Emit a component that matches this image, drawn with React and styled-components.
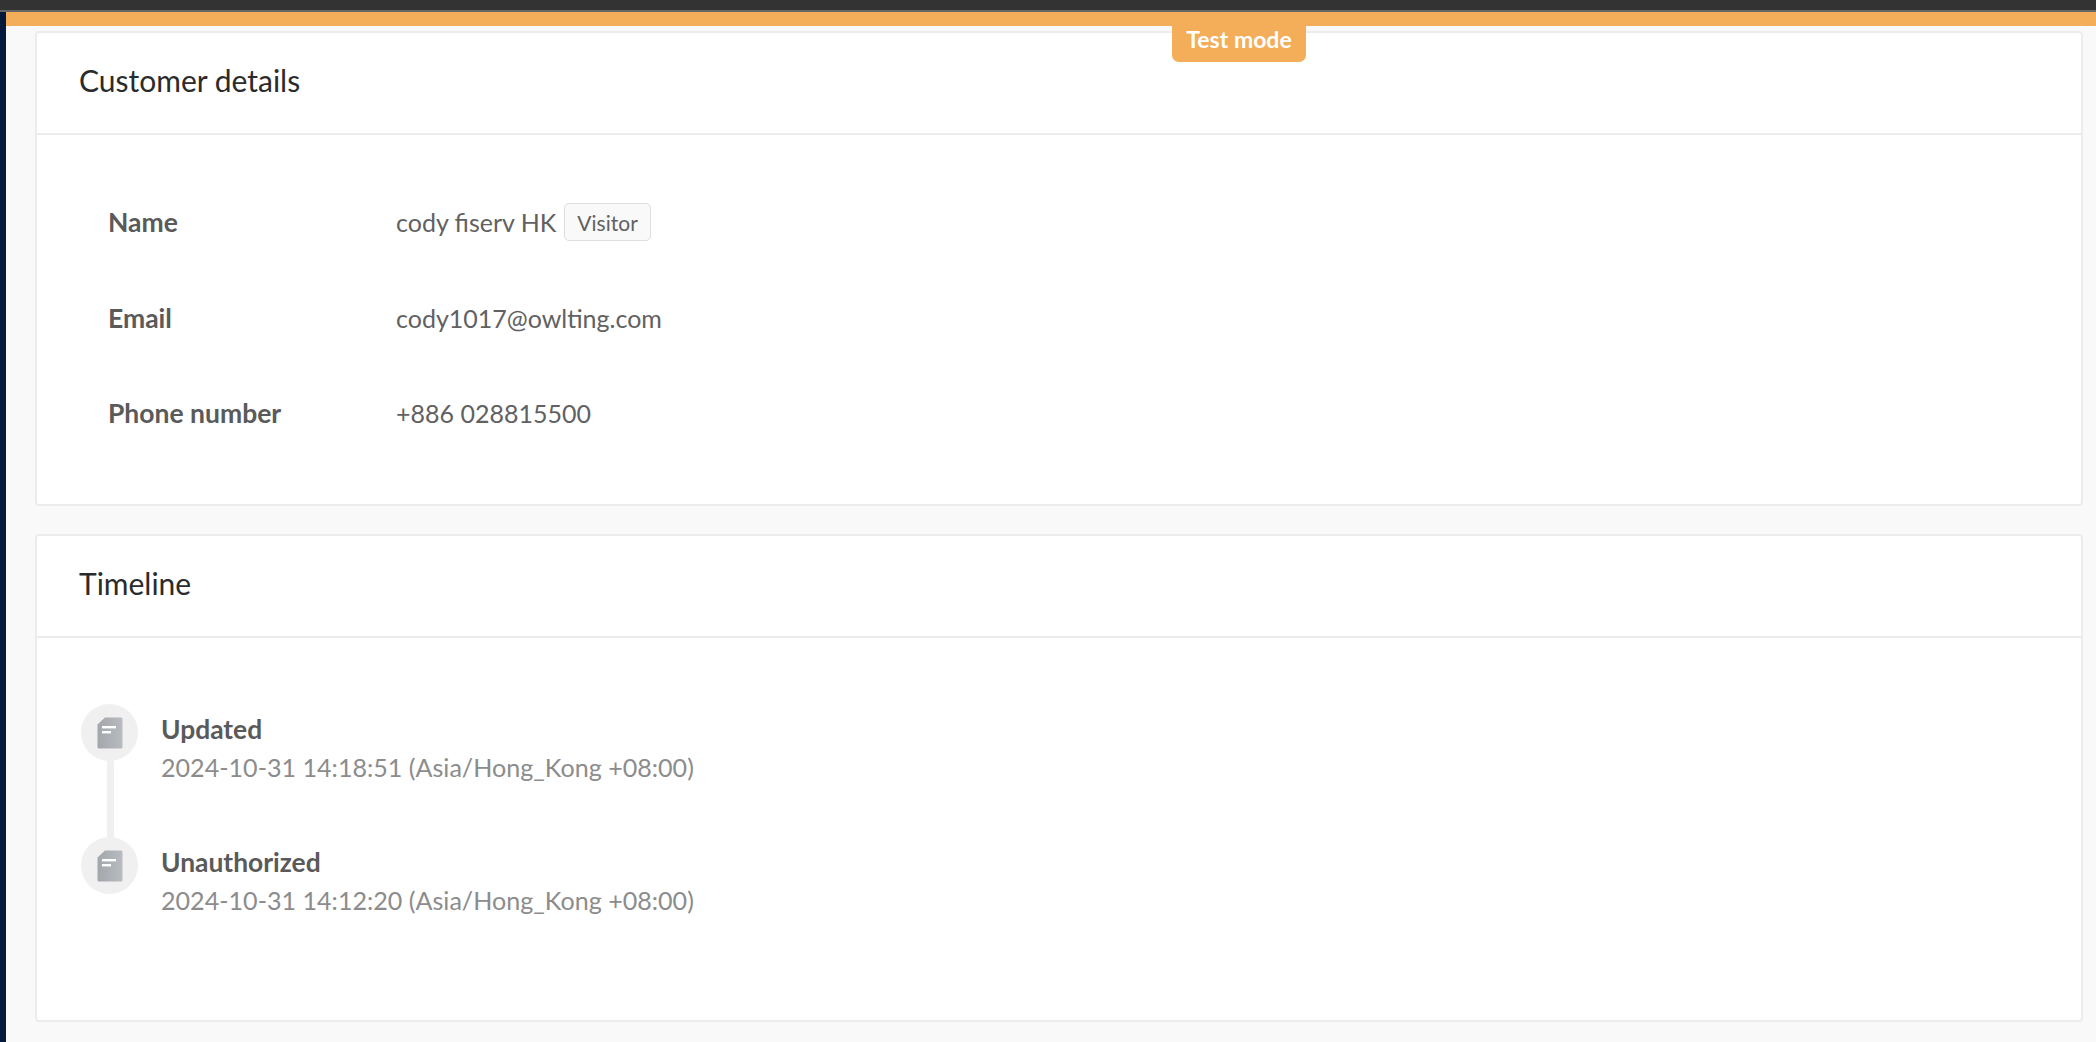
import React from "react"
import styled, { createGlobalStyle } from "styled-components"

const GlobalStyle = createGlobalStyle`
  html, body {
    margin: 0;
    padding: 0;
    background: #f9f9f9;
    font-family: Lato, "Open Sans", sans-serif;
    overflow: hidden;
  }
`

const details = [
  { label: "Name", value: "cody fiserv HK", tag: "Visitor" },
  { label: "Email", value: "cody1017@owlting.com" },
  { label: "Phone number", value: "+886 028815500" },
]

const events = [
  { title: "Updated", time: "2024-10-31 14:18:51 (Asia/Hong_Kong +08:00)" },
  { title: "Unauthorized", time: "2024-10-31 14:12:20 (Asia/Hong_Kong +08:00)" },
]

const DocIcon = ({ id }) => (
  <svg width="26" height="32" viewBox="0 0 26 32">
    <defs>
      <linearGradient id={id} x1="0" y1="0" x2="1" y2="0">
        <stop offset="0" stopColor="#a3a7ab" />
        <stop offset="1" stopColor="#b8bbbf" />
      </linearGradient>
    </defs>
    <path
      d="M8 0.5h16a1.5 1.5 0 0 1 1.5 1.5v28a1.5 1.5 0 0 1-1.5 1.5H2a1.5 1.5 0 0 1-1.5-1.5V7.5z"
      fill={`url(#${id})`}
    />
    <rect x="5" y="9" width="14" height="2.4" fill="#fff" />
    <rect x="5" y="14" width="9" height="2.4" fill="#fff" />
  </svg>
)

const App = () => {
  return (
    <Page>
      <GlobalStyle />
      <TopBar />
      <Shell>
        <SideNav />
        <Main>
          <ModeBar>
            <ModeBadge>Test mode</ModeBadge>
          </ModeBar>
          <Content>
            <Card>
              <CardHeader>Customer details</CardHeader>
              <DetailsBody>
                {details.map(item => (
                  <DetailRow key={item.label}>
                    <DetailLabel>{item.label}</DetailLabel>
                    <DetailValue>
                      {item.value}
                      {item.tag && <Tag>{item.tag}</Tag>}
                    </DetailValue>
                  </DetailRow>
                ))}
              </DetailsBody>
            </Card>
            <Card>
              <CardHeader>Timeline</CardHeader>
              <TimelineBody>
                {events.map((event, index) => (
                  <TimelineItem key={event.title} last={index === events.length - 1}>
                    <IconCircle>
                      <DocIcon id={`doc-${index}`} />
                    </IconCircle>
                    <EventText>
                      <EventTitle>{event.title}</EventTitle>
                      <EventTime>{event.time}</EventTime>
                    </EventText>
                  </TimelineItem>
                ))}
              </TimelineBody>
            </Card>
          </Content>
        </Main>
      </Shell>
    </Page>
  )
}

const Page = styled.div`
  display: flex;
  flex-direction: column;
  height: 1042px;
  overflow: hidden;
`

const TopBar = styled.div`
  height: 10px;
  flex-shrink: 0;
  background-color: #333333;
  border-bottom: 2px solid #666666;
`

const Shell = styled.div`
  display: flex;
  flex: 1;
`

const SideNav = styled.nav`
  width: 6px;
  flex-shrink: 0;
  background-color: #04193c;
`

const Main = styled.main`
  display: flex;
  flex-direction: column;
  flex: 1;
  min-width: 0;
`

const ModeBar = styled.div`
  position: relative;
  height: 14px;
  flex-shrink: 0;
  background-color: #f4ad58;
`

const ModeBadge = styled.div`
  position: absolute;
  z-index: 1;
  top: 14px;
  left: 1166px;
  width: 134px;
  height: 36px;
  box-sizing: border-box;
  text-align: center;
  font-size: 23px;
  line-height: 26px;
  font-weight: 700;
  color: #fff;
  background-color: #f4ad58;
  border-radius: 0 0 7px 7px;
`

const Content = styled.div`
  display: flex;
  flex-direction: column;
  gap: 28px;
  padding: 5px 13px 0 29px;
`

const Card = styled.section`
  background-color: #fff;
  border: 2px solid #ececec;
  border-radius: 4px;
`

const CardHeader = styled.h2`
  margin: 0;
  height: 102px;
  box-sizing: border-box;
  padding: 0 42px 6px;
  display: flex;
  align-items: center;
  font-size: 30px;
  font-weight: 400;
  color: #2b2b2b;
  border-bottom: 2px solid #ececec;
`

const DetailsBody = styled.div`
  display: flex;
  flex-direction: column;
  gap: 49.5px;
  padding: 64px 71px 68px;
`

const DetailRow = styled.div`
  display: flex;
  align-items: center;
  height: 46px;
`

const DetailLabel = styled.div`
  width: 288px;
  flex-shrink: 0;
  font-size: 26.5px;
  font-weight: 700;
  color: #5a5a5a;
`

const DetailValue = styled.div`
  display: flex;
  align-items: center;
  font-size: 25px;
  color: #616161;
`

const Tag = styled.span`
  margin-left: 8px;
  padding: 0 12px;
  height: 36px;
  display: flex;
  align-items: center;
  font-size: 21px;
  color: #616161;
  background-color: #f9f9f9;
  border: 1px solid #dedede;
  border-radius: 5px;
`

const TimelineBody = styled.div`
  display: flex;
  flex-direction: column;
  padding: 66px 44px 50px;
`

const TimelineItem = styled.div`
  position: relative;
  display: flex;
  gap: 23px;
  height: 133px;

  &::before {
    content: "";
    display: ${({ last }) => (last ? "none" : "block")};
    position: absolute;
    left: 26px;
    top: 50px;
    bottom: 0;
    width: 7px;
    background-color: #f0f0f0;
  }
`

const IconCircle = styled.div`
  position: relative;
  display: flex;
  align-items: center;
  justify-content: center;
  width: 57px;
  height: 57px;
  flex-shrink: 0;
  border-radius: 50%;
  background-color: #f0f0f0;
`

const EventText = styled.div`
  padding-top: 7px;
`

const EventTitle = styled.div`
  font-size: 26.4px;
  line-height: 36px;
  font-weight: 700;
  color: #5a5a5a;
`

const EventTime = styled.div`
  font-size: 25.1px;
  line-height: 40px;
  color: #8c8c8c;
`

export default App
